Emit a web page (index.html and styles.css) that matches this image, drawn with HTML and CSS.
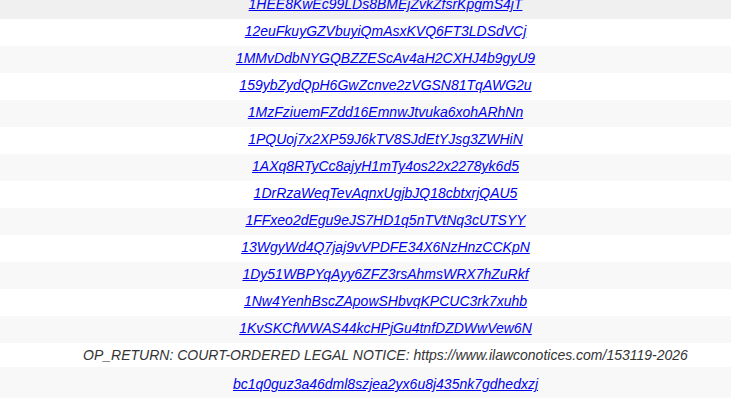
FILE: index.html
```html
<!DOCTYPE html>
<html lang="en">
<head>
    <meta charset="UTF-8">
    <meta name="viewport" content="width=device-width, initial-scale=1.0">
    <title>Transaction outputs</title>
    <link rel="stylesheet" href="styles.css">
</head>
<body>
    <div class="outputs">
        <div class="row hover"><a href="#">1HEE8KwEc99LDs8BMEjZvkZfsrKpgmS4jT</a></div>
        <div class="row"><a href="#">12euFkuyGZVbuyiQmAsxKVQ6FT3LDSdVCj</a></div>
        <div class="row"><a href="#">1MMvDdbNYGQBZZEScAv4aH2CXHJ4b9gyU9</a></div>
        <div class="row"><a href="#">159ybZydQpH6GwZcnve2zVGSN81TqAWG2u</a></div>
        <div class="row"><a href="#">1MzFziuemFZdd16EmnwJtvuka6xohARhNn</a></div>
        <div class="row"><a href="#">1PQUoj7x2XP59J6kTV8SJdEtYJsg3ZWHiN</a></div>
        <div class="row"><a href="#">1AXq8RTyCc8ajyH1mTy4os22x2278yk6d5</a></div>
        <div class="row"><a href="#">1DrRzaWeqTevAqnxUgjbJQ18cbtxrjQAU5</a></div>
        <div class="row"><a href="#">1FFxeo2dEgu9eJS7HD1q5nTVtNq3cUTSYY</a></div>
        <div class="row"><a href="#">13WgyWd4Q7jaj9vVPDFE34X6NzHnzCCKpN</a></div>
        <div class="row"><a href="#">1Dy51WBPYqAyy6ZFZ3rsAhmsWRX7hZuRkf</a></div>
        <div class="row"><a href="#">1Nw4YenhBscZApowSHbvqKPCUC3rk7xuhb</a></div>
        <div class="row"><a href="#">1KvSKCfWWAS44kcHPjGu4tnfDZDWwVew6N</a></div>
        <div class="row note">OP_RETURN: COURT-ORDERED LEGAL NOTICE: https://www.ilawconotices.com/153119-2026</div>
        <div class="row last"><a href="#">bc1q0guz3a46dml8szjea2yx6u8j435nk7gdhedxzj</a></div>
    </div>
</body>
</html>
```

FILE: styles.css
```css
body{
    margin: 0;
    padding: 0;
    background-color: #fff;
    font-family: "Liberation Sans", Arial, sans-serif;
    font-size: 14px;
    font-style: italic;
    color: #333;
    overflow: hidden;
}
.outputs{
    margin-top: -8px;
}
.row{
    text-align: center;
    line-height: 16px;
    padding: 4px 0 7px 40px;
    white-space: nowrap;
}
.row:nth-child(odd){
    background-color: #f8f8f8;
}
.row.hover{
    background-color: #f0f0f0;
}
.row.note{
    padding-bottom: 4px;
}
.row.last{
    padding-top: 9px;
}
.row a{
    color: #0000ee;
    text-decoration: underline;
}
```
